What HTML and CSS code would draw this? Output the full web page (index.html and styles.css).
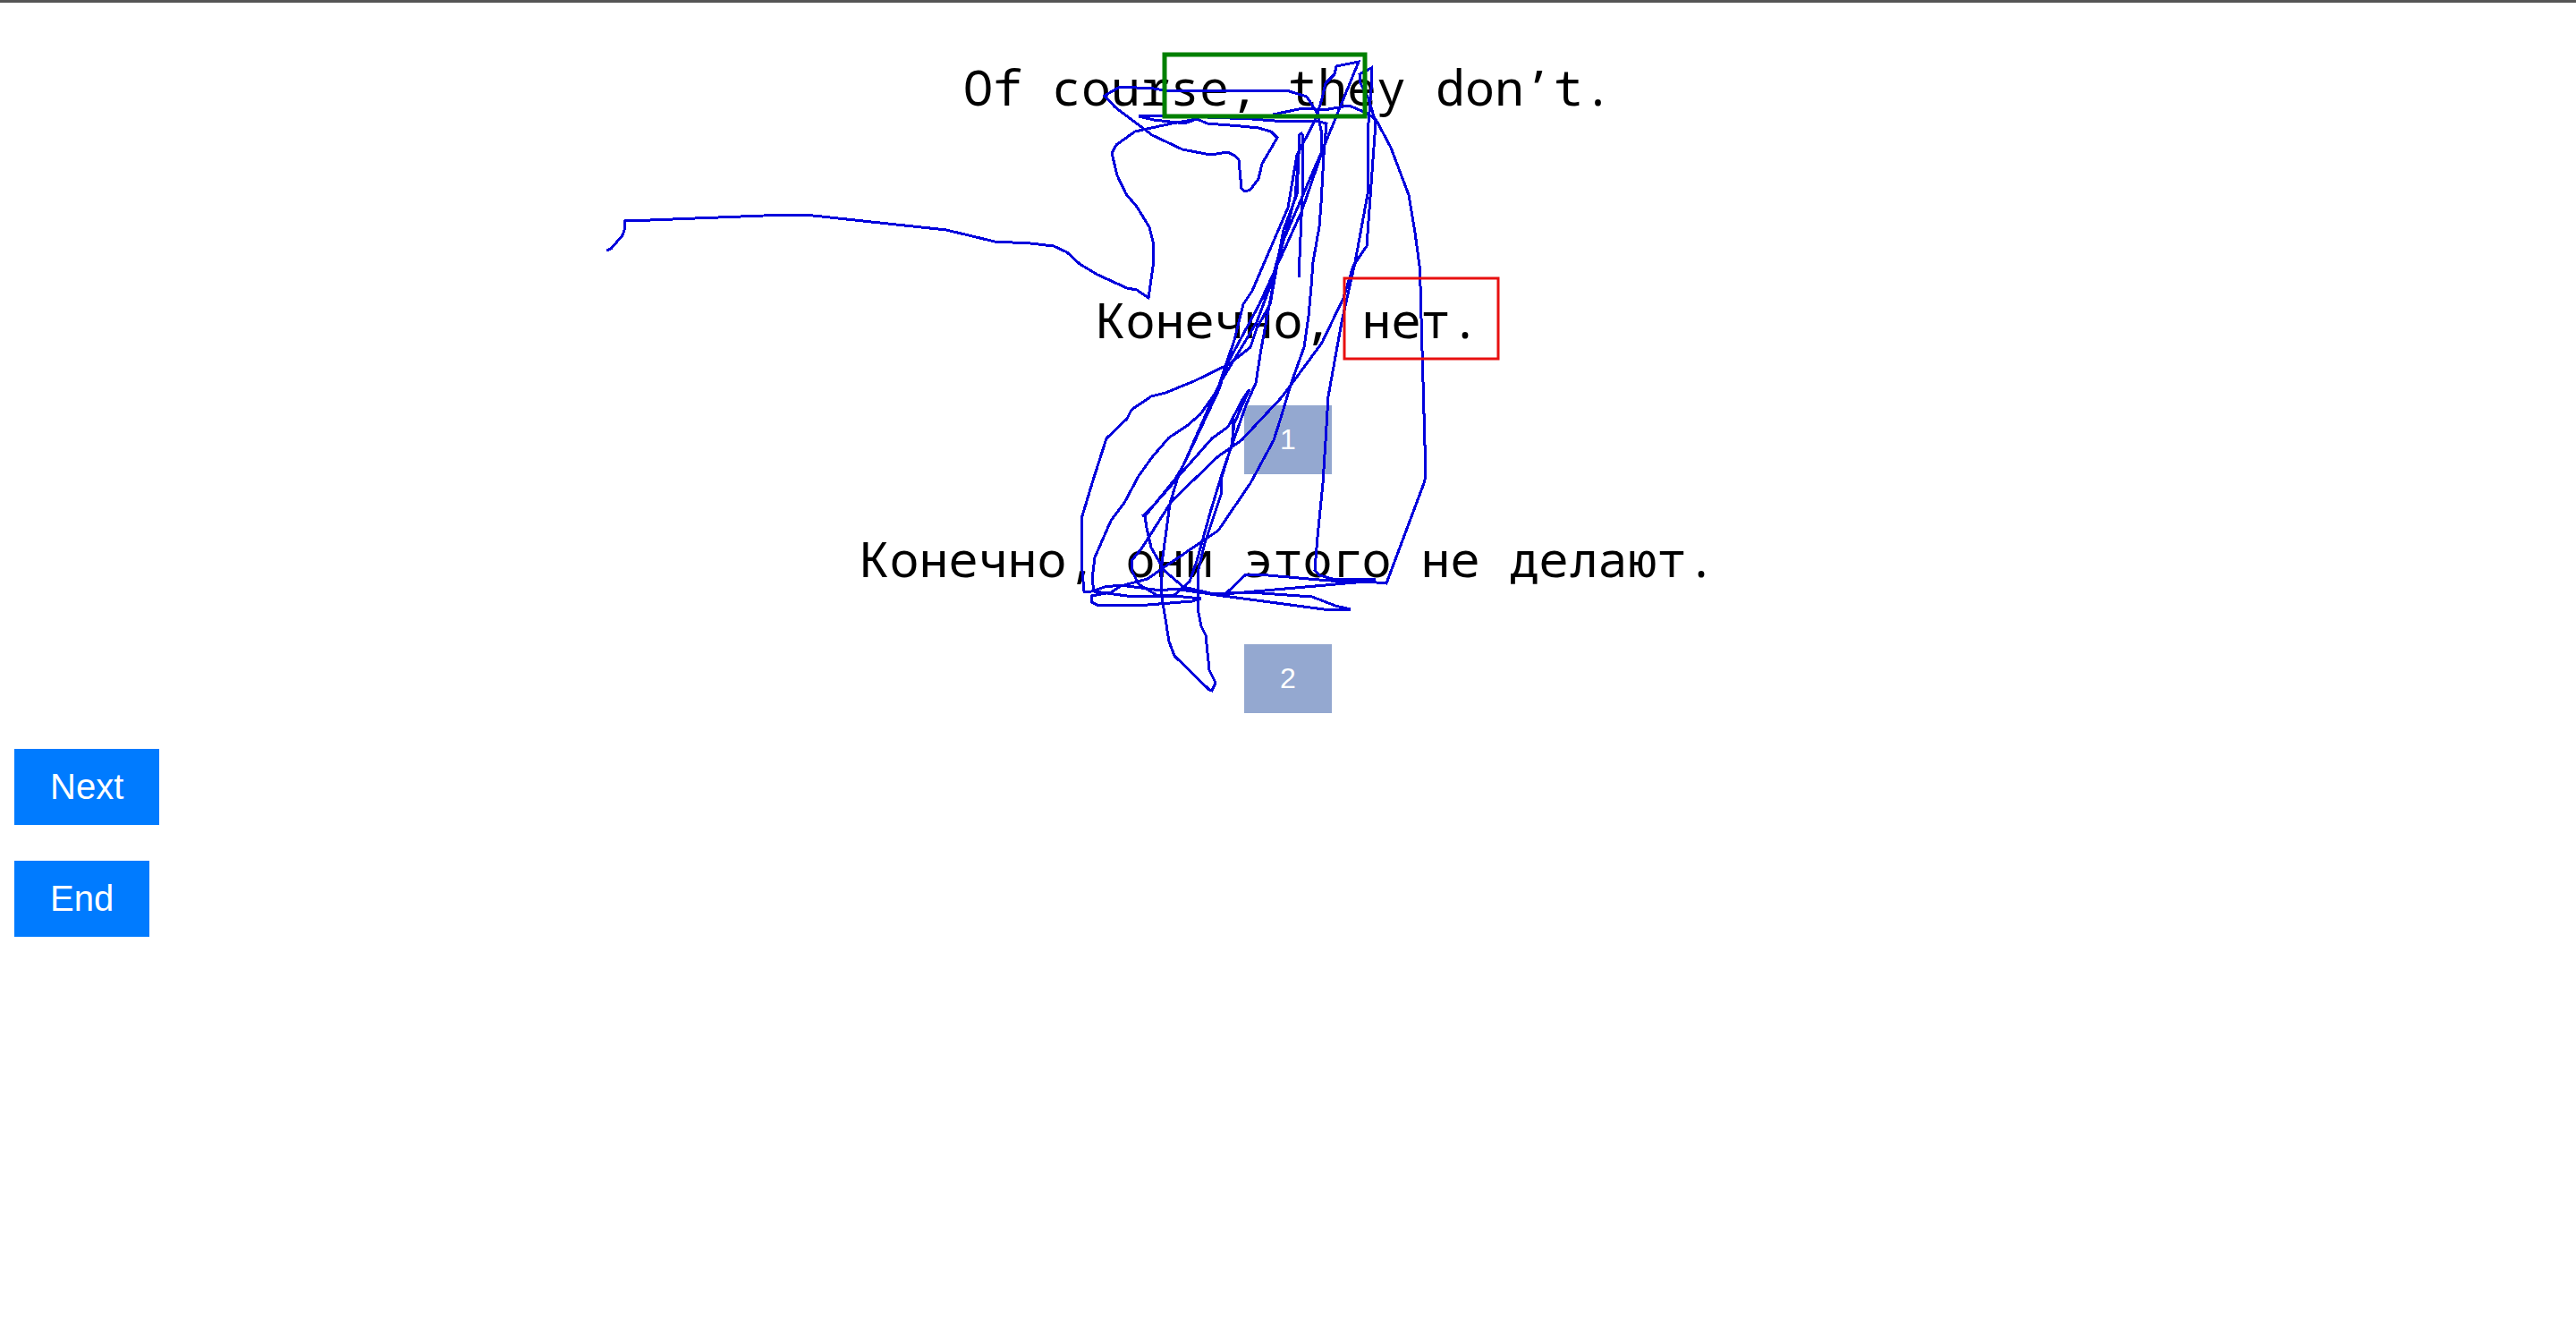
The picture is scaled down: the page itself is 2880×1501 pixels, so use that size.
FILE: index.html
```
<!DOCTYPE html>
<html lang="ru">
<head>
<meta charset="utf-8">
<title>Translation comparison</title>
<link rel="stylesheet" href="styles.css">
</head>
<body>
<main class="page">
  <p class="sentence source" lang="en">Of course, they don’t.</p>
  <section class="option">
    <p class="sentence">Конечно, нет.</p>
    <button class="choice" type="button">1</button>
  </section>
  <section class="option">
    <p class="sentence">Конечно, они этого не делают.</p>
    <button class="choice" type="button">2</button>
  </section>
  <div class="actions">
    <button class="action" type="button">Next</button>
    <button class="action" type="button">End</button>
  </div>
</main>
<svg class="gaze" width="2880" height="800" viewBox="0 0 2880 800" aria-hidden="true">
  <g class="trace">
    <path d="M678 280L683 278 696 263 698 257 699 246 727 246 879 240 900 240 1058 257 1112 270 1152 272 1178 275 1193 282 1207 295 1227 307 1260 322 1271 324 1284 333 1289 298 1289 270 1285 254 1271 231 1259 217 1249 196 1243 171 1248 162 1269 147 1278 145 1310 138 1338 133 1350 138 1387 141 1407 143 1421 147 1428 154 1411 183 1407 200 1398 212 1392 214 1388 211 1385 179 1382 175 1373 170 1353 173 1322 167 1288 151 1247 120 1235 107 1252 97 1290 99 1307 102 1340 101 1438 101 1461 108 1473 127 1478 150 1477 173 1455 237 1408 340 1373 405 1362 435 1342 463 1327 476 1307 489 1288 511 1273 532 1257 562 1242 582 1224 623 1221 647 1223 661 1260 666 1313 666 1343 669 1333 672 1283 676 1253 676 1229 677 1220 673 1220 666 1242 662 1253 655 1283 647 1303 633 1347 603 1362 593 1398 540 1424 492 1432 467 1443 430 1458 388 1463 353 1466 320 1468 293 1475 253 1477 227 1480 173 1483 138 1470 135 1437 136 1400 133 1300 129 1277 129 1273 130 1290 134 1317 137 1327 137 1338 133"/>
    <path d="M1452 310L1456 220 1457 152 1455 149 1453 150 1452 173 1450 217 1435 257 1420 340 1405 367 1398 388 1383 400 1372 408 1335 426 1303 439 1287 443 1265 458 1260 468 1237 490 1221 540 1209 580 1209 627 1212 661 1220 661 1235 656 1253 654 1298 660 1313 658 1360 665 1480 681 1510 681 1493 677 1467 667 1397 662 1372 662 1393 642 1407 642 1463 647 1500 650 1538 648 1490 647 1475 643 1470 637 1473 600 1479 540 1482 493 1485 443 1500 360 1515 293 1529 217 1529 150 1533 100 1533 76 1520 83 1521 93 1530 110 1538 137 1532 220 1528 275 1513 297 1502 333 1478 383 1442 432 1432 445 1388 492 1362 510 1310 560 1277 612 1265 627 1265 637 1273 653 1293 665 1313 665 1330 650 1338 627 1353 573 1367 527 1380 490 1393 453 1404 428 1410 390 1423 320 1435 257"/>
    <path d="M1423 128L1457 121 1480 123 1508 118 1525 125 1538 133 1555 165 1575 218 1582 260 1587 297 1588 320 1591 427 1594 532 1592 540 1550 652 1527 650 1380 663 1353 663 1323 656 1302 638 1287 612 1282 590 1280 577 1310 540 1317 533 1355 490 1373 477 1390 445 1397 435 1380 473 1377 497 1366 533 1365 553 1357 577 1347 607 1339 640 1339 680 1343 700 1348 710 1352 749 1359 763 1355 772 1352 771 1313 733 1307 717 1299 667 1298 637 1308 563 1317 533 1323 520 1353 452 1363 430 1380 380 1390 340 1400 325 1440 232 1450 173 1458 158 1470 135 1473 127 1478 110 1482 93 1492 83 1494 74 1519 69 1483 157 1433 273 1420 320 1405 360 1363 430"/>
    <path d="M1400 325L1390 340 1380 380 1363 435 1323 520 1310 542 1287 568 1277 577M1452 173L1448 220 1425 307 1408 340M1378 467L1378 497"/>
  </g>
  <rect class="word-source" x="1302" y="61" width="224" height="69"/>
  <rect class="word-target" x="1503" y="311" width="172" height="90"/>
</svg>
</body>
</html>
```
FILE: styles.css
```
body {
  position: relative;
  margin: 0;
  overflow-x: hidden;
  background: #fff;
  color: #000;
  font-family: "Liberation Sans", Arial, sans-serif;
}

.page {
  border-top: 3px solid #555;
  padding: 56px 16px 40px;
}

.sentence {
  margin: 0;
  font-family: "Noto Sans Mono", "DejaVu Sans Mono", monospace;
  font-size: 55px;
  line-height: 76px;
  text-align: center;
}

.source {
  margin-bottom: 184px;
}

.option {
  display: flex;
  flex-direction: column;
  align-items: center;
  gap: 58px;
  margin-bottom: 56px;
}

button {
  border: 0;
  color: #fff;
  font-family: inherit;
  cursor: pointer;
}

.choice {
  padding: 20px 40px;
  background: #94a8d0;
  font-size: 32px;
  line-height: 37px;
}

.actions {
  display: flex;
  flex-direction: column;
  align-items: flex-start;
  gap: 40px;
  margin-top: -16px;
}

.action {
  padding: 20px 40px;
  background: #007bff;
  font-size: 40px;
  line-height: 45px;
}

/* Recorded pointer path, centred over the sentences */
.gaze {
  position: absolute;
  top: 0;
  left: 50%;
  transform: translateX(-50%);
  pointer-events: none;
}

.trace {
  fill: none;
  stroke: #0000dc;
  stroke-width: 3;
  shape-rendering: crispEdges;
}

.word-source {
  fill: none;
  stroke: #008000;
  stroke-width: 5;
}

.word-target {
  fill: none;
  stroke: #e81010;
  stroke-width: 3;
}
```
